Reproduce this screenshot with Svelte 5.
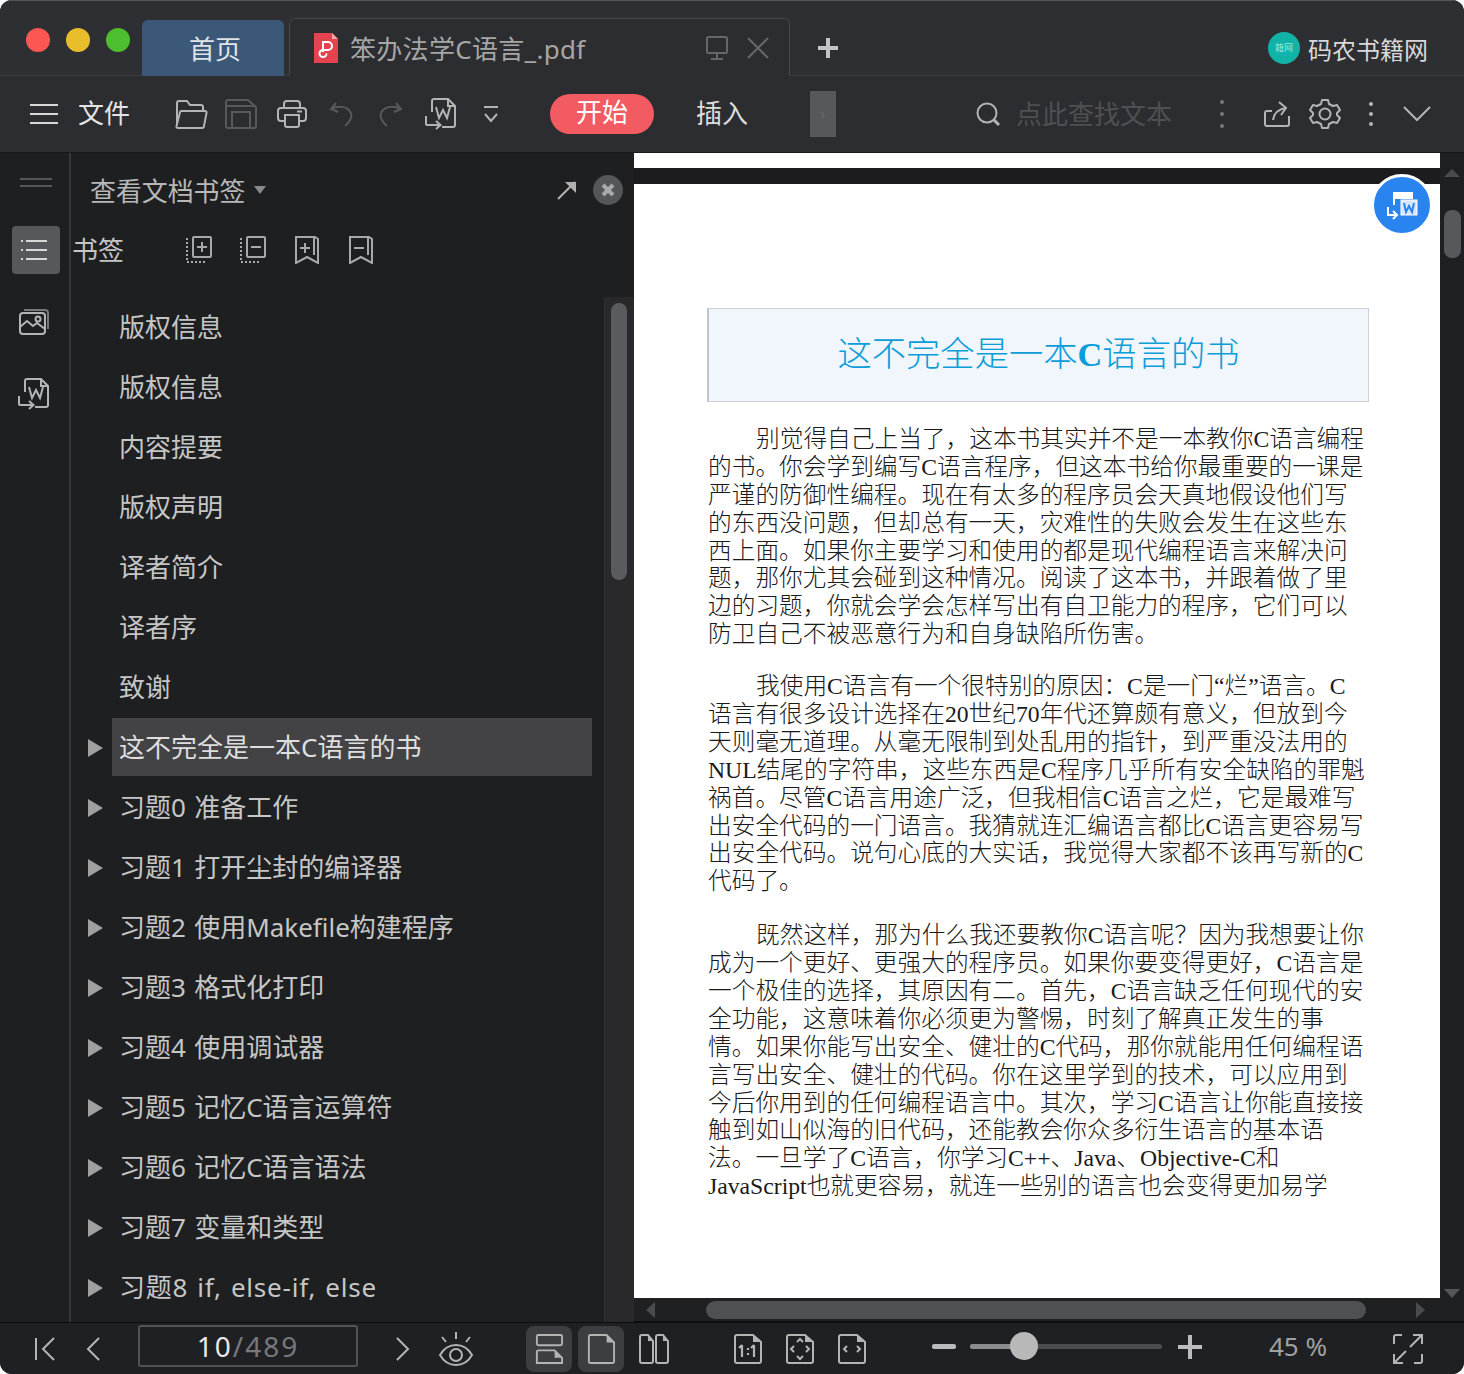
<script>
	const bookmarks = [
		{ label: '版权信息' },
		{ label: '版权信息' },
		{ label: '内容提要' },
		{ label: '版权声明' },
		{ label: '译者简介' },
		{ label: '译者序' },
		{ label: '致谢' },
		{ label: '这不完全是一本C语言的书', more: true, active: true },
		{ label: '习题0 准备工作', more: true },
		{ label: '习题1 打开尘封的编译器', more: true },
		{ label: '习题2 使用Makefile构建程序', more: true },
		{ label: '习题3 格式化打印', more: true },
		{ label: '习题4 使用调试器', more: true },
		{ label: '习题5 记忆C语言运算符', more: true },
		{ label: '习题6 记忆C语言语法', more: true },
		{ label: '习题7 变量和类型', more: true },
		{ label: '习题8 if, else-if, else', more: true, wide: true }
	];

	const paragraphs = [
		[
			'别觉得自己上当了，这本书其实并不是一本教你C语言编程',
			'的书。你会学到编写C语言程序，但这本书给你最重要的一课是',
			'严谨的防御性编程。现在有太多的程序员会天真地假设他们写',
			'的东西没问题，但却总有一天，灾难性的失败会发生在这些东',
			'西上面。如果你主要学习和使用的都是现代编程语言来解决问',
			'题，那你尤其会碰到这种情况。阅读了这本书，并跟着做了里',
			'边的习题，你就会学会怎样写出有自卫能力的程序，它们可以',
			'防卫自己不被恶意行为和自身缺陷所伤害。'
		],
		[
			'我使用C语言有一个很特别的原因：C是一门“烂”语言。C',
			'语言有很多设计选择在20世纪70年代还算颇有意义，但放到今',
			'天则毫无道理。从毫无限制到处乱用的指针，到严重没法用的',
			'NUL结尾的字符串，这些东西是C程序几乎所有安全缺陷的罪魁',
			'祸首。尽管C语言用途广泛，但我相信C语言之烂，它是最难写',
			'出安全代码的一门语言。我猜就连汇编语言都比C语言更容易写',
			'出安全代码。说句心底的大实话，我觉得大家都不该再写新的C',
			'代码了。'
		],
		[
			'既然这样，那为什么我还要教你C语言呢？因为我想要让你',
			'成为一个更好、更强大的程序员。如果你要变得更好，C语言是',
			'一个极佳的选择，其原因有二。首先，C语言缺乏任何现代的安',
			'全功能，这意味着你必须更为警惕，时刻了解真正发生的事',
			'情。如果你能写出安全、健壮的C代码，那你就能用任何编程语',
			'言写出安全、健壮的代码。你在这里学到的技术，可以应用到',
			'今后你用到的任何编程语言中。其次，学习C语言让你能直接接',
			'触到如山似海的旧代码，还能教会你众多衍生语言的基本语',
			'法。一旦学了C语言，你学习C++、Java、Objective-C和',
			'JavaScript也就更容易，就连一些别的语言也会变得更加易学'
		]
	];
</script>

{#snippet wordIcon()}
	<svg class="ic" width="32" height="32" viewBox="0 0 32 32">
		<path d="M7 14V3a2 2 0 0 1 2-2h14l7 7v19a2 2 0 0 1-2 2H17" />
		<path d="M23 1v7h7" />
		<path d="M11 9l3 11 4-8 4 8 3-11" />
		<path d="M1 18v8a1 1 0 0 0 1 1h13" />
		<path d="M11 23l4.500 4-4.500 4" />
	</svg>
{/snippet}

{#snippet pageShape()}
	<path d="M3 1h16l8 7v19a2 2 0 0 1-2 2H3a2 2 0 0 1-2-2V3a2 2 0 0 1 2-2z" />
	<path d="M19 1l8 7h-8z" fill="#b4b4b4" stroke="none" />
{/snippet}

<div class="window" lang="zh-CN">
	<header class="titlebar">
		<div class="lights">
			<span class="light red"></span>
			<span class="light yellow"></span>
			<span class="light green"></span>
		</div>
		<div class="tab home">首页</div>
		<div class="tab doc">
			<svg width="26" height="32" viewBox="0 0 26 32" class="pdf">
				<path d="M1 1h18l6 6v24H1z" fill="#e5444f" />
				<path d="M19 1l6 6h-6z" fill="#f4a3a8" />
				<path d="M10 20V10h5a4 4 0 0 1 0 8h-5a3.5 3.5 0 1 0 3.5 3.5" fill="none" stroke="#fff" stroke-width="2" />
			</svg>
			<span class="doc-name">笨办法学C语言_.pdf</span>
			<svg class="ic dim" width="24" height="26" viewBox="0 0 24 26">
				<rect x="2" y="2" width="20" height="16" rx="1.5" />
				<path d="M12 18v5M6 24h12" />
			</svg>
			<svg class="ic dim x" width="24" height="24" viewBox="0 0 24 24">
				<path d="M2 2l20 20M22 2L2 22" />
			</svg>
		</div>
		<svg class="plus" width="22" height="22" viewBox="0 0 22 22">
			<path d="M11 1v20M1 11h20" />
		</svg>
		<div class="account">
			<span class="avatar">籍网</span>
			<span>码农书籍网</span>
		</div>
	</header>

	<nav class="toolbar">
		<span class="slot ham">
			<svg class="ic bright" width="28" height="20" viewBox="0 0 28 20">
				<path d="M0 1h28M0 10h28M0 19h28" />
			</svg>
		</span>
		<span class="file">文件</span>
		<div class="tools">
			<span class="slot">
				<svg class="ic" width="33" height="29" viewBox="0 0 33 29">
					<path d="M2 25V3a2 2 0 0 1 2-2h8l3 4h11a2 2 0 0 1 2 2v3" />
					<path d="M7 11h23a1.5 1.5 0 0 1 1.5 2L29 26a2 2 0 0 1-2 2H3a1.5 1.5 0 0 1-1.5-2L5 12.5A1.5 1.5 0 0 1 7 11z" />
				</svg>
			</span>
			<span class="slot">
				<svg class="ic off" width="32" height="30" viewBox="0 0 32 30">
					<path d="M3 1h20l8 7v19a2 2 0 0 1-2 2H3a2 2 0 0 1-2-2V3a2 2 0 0 1 2-2z" />
					<path d="M2 7h28M7 29V13h18v16" />
				</svg>
			</span>
			<span class="slot print">
				<svg class="ic" width="30" height="28" viewBox="0 0 30 28">
					<path d="M7 8V4a3 3 0 0 1 3-3h10a3 3 0 0 1 3 3v4" />
					<path d="M7 21H4a3 3 0 0 1-3-3v-7a3 3 0 0 1 3-3h22a3 3 0 0 1 3 3v7a3 3 0 0 1-3 3h-3" />
					<path d="M8 15h14v10a2 2 0 0 1-2 2H10a2 2 0 0 1-2-2z" />
					<path d="M20 11.500h5" />
				</svg>
			</span>
			<span class="slot">
				<svg class="ic off" width="24" height="26" viewBox="0 0 24 26">
					<path d="M7 2L2 8l7 3" />
					<path d="M2 8c6-3 14-3 18 1s3 10-4 16" />
				</svg>
			</span>
			<span class="slot">
				<svg class="ic off" width="24" height="26" viewBox="0 0 24 26">
					<path d="M17 2l5 6-7 3" />
					<path d="M22 8C16 5 8 5 4 9s-3 10 4 16" />
				</svg>
			</span>
			<span class="slot">{@render wordIcon()}</span>
			<span class="slot">
				<svg class="ic" width="16" height="18" viewBox="0 0 16 18">
					<path d="M1 2h14M2 9l6 7 6-7" />
				</svg>
			</span>
		</div>
		<button class="pill">开始</button>
		<span class="insert">插入</span>
		<span class="more-tabs">›</span>
		<span class="slot search-ic">
			<svg class="ic" width="26" height="26" viewBox="0 0 26 26">
				<circle cx="12" cy="12" r="9.500" />
				<path d="M19 19l5 5" stroke-width="3" />
			</svg>
		</span>
		<span class="search-text">点此查找文本</span>
		<span class="slot dots-a"><span class="dots dark"></span></span>
		<span class="slot share">
			<svg class="ic" width="26" height="28" viewBox="0 0 26 28">
				<path d="M8 11H3a2 2 0 0 0-2 2v11a2 2 0 0 0 2 2h20a2 2 0 0 0 2-2v-8" />
				<path d="M9 20c1-7 6-11 13-12" />
				<path d="M15 2l7 6-5 7" />
			</svg>
		</span>
		<span class="slot">
			<svg class="ic" width="32" height="32" viewBox="0 0 32 32">
				<circle cx="16" cy="16" r="5.500" />
				<path d="M13 2h6l1 4 4 2 4-1 3 5-3 3v2l3 3-3 5-4-1-4 2-1 4h-6l-1-4-4-2-4 1-3-5 3-3v-2L1 12l3-5 4 1 4-2z" stroke-linejoin="round" />
			</svg>
		</span>
		<span class="slot dots-b"><span class="dots"></span></span>
		<span class="slot">
			<svg class="ic" width="28" height="16" viewBox="0 0 28 16">
				<path d="M1 1l13 13L27 1" />
			</svg>
		</span>
	</nav>

	<main class="main">
		<aside class="rail">
			<div class="grip"></div>
			<div class="rail-btn active">
				<svg class="ic bright" width="26" height="22" viewBox="0 0 26 22">
					<path d="M0 2h2M5 2h21M0 11h2M5 11h21M0 20h2M5 20h21" />
				</svg>
			</div>
			<div class="rail-btn">
				<svg class="ic" width="30" height="26" viewBox="0 0 30 26">
					<path d="M5 1h21a3 3 0 0 1 3 3v16" opacity=".6" />
					<rect x="1" y="4" width="25" height="21" rx="3" />
					<path d="M1 18l7-6 6 5 4-3 8 6" />
					<circle cx="19" cy="10" r="2.500" />
				</svg>
			</div>
			<div class="rail-btn">{@render wordIcon()}</div>
		</aside>

		<section class="panel">
			<div class="panel-head">
				<span class="panel-title">查看文档书签</span>
				<span class="caret"></span>
				<svg class="ic pin" width="20" height="20" viewBox="0 0 20 20">
					<path d="M1 19L18 2" />
					<path d="M8 2h11v11z" fill="#b0b0b0" stroke="none" />
				</svg>
				<span class="close">
					<svg width="14" height="14" viewBox="0 0 14 14"><path d="M2 2l10 10M12 2L2 12" /></svg>
				</span>
			</div>
			<div class="panel-tools">
				<span class="panel-label">书签</span>
				<span class="slot-sm first">
					<svg class="ic thin" width="28" height="28" viewBox="0 0 28 28">
						<path d="M2 2v24M2 26h20" stroke-dasharray="2 2" />
						<rect x="8" y="1" width="18" height="20" rx="1" />
						<path d="M17 6v10M12 11h10" />
					</svg>
				</span>
				<span class="slot-sm">
					<svg class="ic thin" width="28" height="28" viewBox="0 0 28 28">
						<path d="M2 2v24M2 26h20" stroke-dasharray="2 2" />
						<rect x="8" y="1" width="18" height="20" rx="1" />
						<path d="M12 11h10" />
					</svg>
				</span>
				<span class="slot-sm">
					<svg class="ic thin" width="26" height="28" viewBox="0 0 26 28">
						<path d="M2 1h19l3 2v24l-11-6-11 6z" />
						<path d="M20 1v18M11 7v10M6 12h10" />
					</svg>
				</span>
				<span class="slot-sm">
					<svg class="ic thin" width="26" height="28" viewBox="0 0 26 28">
						<path d="M2 1h19l3 2v24l-11-6-11 6z" />
						<path d="M20 1v18M6 12h10" />
					</svg>
				</span>
			</div>
			<div class="panel-body">
				<ul class="list">
					{#each bookmarks as item}
						<li class="row">
							<span class="arrow-slot">
								{#if item.more}<span class="arrow"></span>{/if}
							</span>
							<span class="label" class:active={item.active} class:wide={item.wide}>{item.label}</span>
						</li>
					{/each}
				</ul>
				<div class="list-scroll"><span class="list-thumb"></span></div>
			</div>
		</section>

		<section class="viewer">
			<div class="viewer-top">
				<div class="pages">
					<div class="page-tail"></div>
					<div class="page-gap"></div>
					<article class="page">
						<h1 class="heading">这不完全是一本<b>C</b>语言的书</h1>
						{#each paragraphs as lines}
							<div class="para">
								{#each lines as line}
									<div class="line">{line}</div>
								{/each}
							</div>
						{/each}
					</article>
				</div>
				<div class="vscroll">
					<span class="tri up"></span>
					<span class="vthumb"></span>
					<span class="tri down"></span>
				</div>
			</div>
			<div class="hscroll">
				<span class="tri left"></span>
				<span class="hthumb"></span>
				<span class="tri right"></span>
			</div>
			<div class="fab">
				<svg width="32" height="30" viewBox="0 0 32 30">
					<path d="M7 2h20v7H7zM7 9h2v6H7z" fill="#fff" />
					<rect x="15" y="10" width="16" height="15" fill="#d6e7fd" stroke="#fff" />
					<path d="M18 13l2 9 3-6 3 6 2-9" fill="none" stroke="#2a84f0" stroke-width="2" />
					<path d="M2 17v8h8M7 21l4 4-4 4" fill="none" stroke="#fff" stroke-width="2" />
				</svg>
			</div>
		</section>
	</main>

	<footer class="statusbar">
		<span class="slot first-page">
			<svg class="ic" width="22" height="24" viewBox="0 0 22 24"><path d="M2 1v22M20 1L9 12l11 11" /></svg>
		</span>
		<span class="slot">
			<svg class="ic" width="14" height="24" viewBox="0 0 14 24"><path d="M13 1L2 12l11 11" /></svg>
		</span>
		<div class="pager"><b>10</b><span>/489</span></div>
		<span class="slot next-page">
			<svg class="ic" width="14" height="24" viewBox="0 0 14 24"><path d="M1 1l11 11L1 23" /></svg>
		</span>
		<span class="slot eye">
			<svg class="ic" width="34" height="36" viewBox="0 0 34 36">
				<path d="M17 1v7M3 6l4 5M31 6l-4 5" />
				<path d="M1 24c4-7 10-10 16-10s12 3 16 10c-4 7-10 10-16 10S5 31 1 24z" />
				<circle cx="17" cy="24" r="6" />
			</svg>
		</span>
		<span class="mode first-mode">
			<svg class="ic" width="28" height="30" viewBox="0 0 30 32">
				<rect x="2" y="1" width="27" height="11" rx="1.500" />
				<path d="M2 31V19a1.500 1.500 0 0 1 1.500-1.500H21l8 8V31z" />
				<path d="M21 17.500l8 8h-8z" fill="#b4b4b4" stroke="none" />
			</svg>
		</span>
		<span class="mode">
			<svg class="ic" width="28" height="30" viewBox="0 0 30 32">
				<path d="M4 1h17l8 8v20a2 2 0 0 1-2 2H4a2 2 0 0 1-2-2V3a2 2 0 0 1 2-2z" />
				<path d="M21 1l8 8h-8z" fill="#b4b4b4" stroke="none" />
			</svg>
		</span>
		<span class="slot">
			<svg class="ic" width="30" height="30" viewBox="0 0 30 30">
				<path d="M3 1h6l5 6v20a2 2 0 0 1-2 2H3a2 2 0 0 1-2-2V3a2 2 0 0 1 2-2z" />
				<path d="M19 1h5l5 6v20a2 2 0 0 1-2 2h-8a2 2 0 0 1-2-2V3a2 2 0 0 1 2-2z" />
				<path d="M9 1l5 6H9zM24 1l5 6h-5z" fill="#b4b4b4" stroke="none" />
			</svg>
		</span>
		<span class="slot one-one">
			<svg class="ic" width="28" height="30" viewBox="0 0 28 30">
				{@render pageShape()}
				<path d="M8 11v12M8 11l-3 3M20 11v12M20 11l-3 3M14 14v2M14 19v2" stroke-width="2.200" />
			</svg>
		</span>
		<span class="slot fit">
			<svg class="ic" width="28" height="30" viewBox="0 0 28 30">
				{@render pageShape()}
				<path d="M11 8l3-3 3 3M11 22l3 3 3-3M8 12l-3 3 3 3M20 12l3 3-3 3" />
			</svg>
		</span>
		<span class="slot fit">
			<svg class="ic" width="28" height="30" viewBox="0 0 28 30">
				{@render pageShape()}
				<path d="M9 12l-3 3 3 3M19 12l3 3-3 3" />
			</svg>
		</span>
		<span class="slot zoom-out"><span class="minus"></span></span>
		<div class="slider">
			<span class="fill"></span>
			<span class="knob"></span>
		</div>
		<span class="slot zoom-in">
			<svg class="zoom-plus" width="24" height="24" viewBox="0 0 24 24"><path d="M12 0v24M0 12h24" /></svg>
		</span>
		<span class="percent">45 %</span>
		<span class="slot expand">
			<svg class="ic" width="30" height="30" viewBox="0 0 30 30">
				<path d="M1 10V3a2 2 0 0 1 2-2h6M20 1h9v9M29 1L17 13M29 20v7a2 2 0 0 1-2 2h-6M10 29H1v-9M1 29l12-12" />
			</svg>
		</span>
	</footer>
</div>

<style>
	:global(body) {
		margin: 0;
		background: #fff;
	}

	.window {
		width: 1464px;
		height: 1374px;
		display: flex;
		flex-direction: column;
		overflow: hidden;
		border-radius: 12px;
		background: #1f2023;
		font-family: 'Noto Sans', 'Noto Sans CJK SC', sans-serif;
		color: #c8c8c8;
	}

	.ic {
		fill: none;
		stroke: #b4b4b4;
		stroke-width: 2;
		display: block;
	}
	.ic.bright {
		stroke: #d8d8d8;
	}
	.ic.off {
		stroke: #58595c;
	}
	.ic.dim {
		stroke: #66676a;
	}
	.ic.thin {
		stroke: #a8a8a8;
	}

	.slot {
		width: 48px;
		height: 48px;
		flex: none;
		display: flex;
		align-items: center;
		justify-content: center;
	}

	/* title bar */
	.titlebar {
		height: 76px;
		flex: none;
		display: flex;
		align-items: flex-end;
		padding-left: 26px;
		box-sizing: border-box;
		background: #2e2f32;
		border-top: 1px solid #55565a;
		border-bottom: 1px solid #3a3b3f;
	}
	.lights {
		display: flex;
		gap: 16px;
		align-self: flex-start;
		margin-top: 27px;
	}
	.light {
		width: 24px;
		height: 24px;
		border-radius: 50%;
	}
	.red {
		background: #fc5753;
	}
	.yellow {
		background: #e8bd2c;
	}
	.green {
		background: #4dbe2e;
	}
	.tab {
		height: 56px;
		box-sizing: border-box;
		font-size: 26px;
		border-radius: 6px 6px 0 0;
		margin-bottom: -1px;
	}
	.home {
		width: 142px;
		margin-left: 12px;
		padding-left: 4px;
		display: flex;
		align-items: center;
		justify-content: center;
		background: #3b5878;
		color: #e0e4e8;
	}
	.doc {
		width: 501px;
		height: 58px;
		margin-left: 5px;
		display: flex;
		align-items: center;
		padding-left: 23px;
		border: 1px solid #47484c;
		border-bottom: none;
		background: #2c2d30;
		color: #a6a6a6;
	}
	.doc-name {
		margin-left: 11px;
		width: 355px;
		letter-spacing: 0.3px;
		white-space: nowrap;
	}
	.x {
		margin-left: 17px;
	}
	.plus {
		fill: none;
		stroke: #c4c4c4;
		stroke-width: 4;
		margin: 0 0 16px 27px;
	}
	.account {
		margin-left: auto;
		align-self: center;
		margin-top: 20px;
		padding-right: 36px;
		display: flex;
		align-items: center;
		gap: 8px;
		font-size: 24px;
		color: #d8d8d8;
	}
	.avatar {
		width: 32px;
		height: 32px;
		border-radius: 50%;
		background: #10b3a5;
		color: #8fe3da;
		font-size: 9px;
		line-height: 32px;
		text-align: center;
		white-space: nowrap;
	}

	/* tool bar */
	.toolbar {
		height: 77px;
		flex: none;
		display: flex;
		align-items: center;
		padding-left: 20px;
		box-sizing: border-box;
		background: #2c2d30;
		border-bottom: 1px solid #17181a;
		font-size: 26px;
	}
	.file {
		margin-left: 10px;
		width: 53px;
		padding-bottom: 4px;
		color: #e4e4e4;
	}
	.tools {
		display: flex;
		margin-left: 35px;
	}
	.tools .slot {
		width: 50px;
	}
	.tools .print {
		padding-left: 2px;
		box-sizing: border-box;
	}
	.pill {
		margin-left: 34px;
		width: 104px;
		height: 40px;
		padding: 0 0 4px;
		border: none;
		border-radius: 20px;
		background: #f25b62;
		color: #fff;
		font: inherit;
		line-height: 1;
	}
	.insert {
		margin-left: 42px;
		width: 53px;
		padding-bottom: 4px;
		color: #dcdcdc;
	}
	.more-tabs {
		margin-left: 61px;
		width: 26px;
		height: 46px;
		background: #57585b;
		color: #6a6b6e;
		font-size: 16px;
		line-height: 46px;
		text-align: center;
	}
	.search-ic {
		margin-left: 128px;
	}
	.search-text {
		margin-left: 4px;
		width: 157px;
		padding-bottom: 2px;
		color: #4f5053;
		white-space: nowrap;
	}
	.dots-a {
		margin-left: 25px;
	}
	.share {
		margin-left: 7px;
	}
	.dots-b {
		width: 44px;
	}
	.dots {
		width: 4px;
		height: 4px;
		border-radius: 50%;
		background: #b4b4b4;
		box-shadow:
			0 -10px 0 #b4b4b4,
			0 10px 0 #b4b4b4;
	}
	.dots.dark {
		background: #77787b;
		box-shadow:
			0 -12px 0 #77787b,
			0 12px 0 #77787b;
	}

	/* main area */
	.main {
		flex: 1;
		min-height: 0;
		display: flex;
		position: relative;
	}
	.rail {
		width: 71px;
		flex: none;
		box-sizing: border-box;
		padding-left: 12px;
		display: flex;
		flex-direction: column;
		background: #1e1f21;
		border-right: 2px solid #36373a;
	}
	.grip {
		width: 32px;
		height: 9px;
		margin: 25px 0 39px 8px;
		box-sizing: border-box;
		border-top: 2px solid #55565a;
		border-bottom: 2px solid #55565a;
	}
	.rail-btn {
		width: 48px;
		height: 48px;
		margin-bottom: 24px;
		padding-right: 5px;
		box-sizing: border-box;
		display: flex;
		align-items: center;
		justify-content: center;
		border-radius: 4px;
	}
	.rail-btn.active {
		padding-right: 4px;
		background: #57585b;
	}

	.panel {
		width: 563px;
		flex: none;
		display: flex;
		flex-direction: column;
		background: #1e1f21;
	}
	.panel-head {
		height: 74px;
		flex: none;
		display: flex;
		align-items: center;
		padding-left: 19px;
	}
	.panel-title {
		font-size: 25.900px;
		color: #b8b8b8;
		width: 164px;
		white-space: nowrap;
	}
	.caret {
		width: 0;
		height: 0;
		border: 6px solid transparent;
		border-top: 8px solid #8a8a8a;
		border-bottom: none;
	}
	.pin {
		margin-left: 291px;
	}
	.close {
		margin-left: 16px;
		width: 30px;
		height: 30px;
		border-radius: 50%;
		background: #55565a;
		display: flex;
		align-items: center;
		justify-content: center;
	}
	.close path {
		fill: none;
		stroke: #a9a9a9;
		stroke-width: 4;
	}
	.panel-tools {
		height: 46px;
		flex: none;
		display: flex;
		align-items: center;
		padding-left: 1px;
	}
	.panel-label {
		width: 52px;
		padding-bottom: 2px;
		font-size: 26px;
		color: #c4c4c4;
	}
	.slot-sm {
		width: 54px;
		display: flex;
		justify-content: center;
		flex: none;
	}
	.slot-sm.first {
		margin-left: 48px;
	}
	.panel-body {
		flex: 1;
		min-height: 0;
		margin-top: 24px;
		display: flex;
	}
	.list {
		flex: 1;
		min-width: 0;
		margin: 0;
		padding: 0;
		list-style: none;
	}
	.row {
		height: 60px;
		display: flex;
		align-items: center;
		font-size: 26px;
	}
	.arrow-slot {
		width: 41px;
		flex: none;
		display: flex;
		justify-content: flex-end;
		padding: 2px 9px 0 0;
		box-sizing: border-box;
	}
	.arrow {
		width: 0;
		height: 0;
		border: 9px solid transparent;
		border-left: 15px solid #a0a0a0;
		border-right: none;
	}
	.label {
		width: 480px;
		height: 58px;
		line-height: 59px;
		padding-left: 7px;
		box-sizing: border-box;
		white-space: nowrap;
		word-spacing: 1.500px;
		color: #c6c6c6;
	}
	.label.active {
		background: #434346;
		color: #dedede;
	}
	.label.wide {
		letter-spacing: 0.800px;
	}
	.list-scroll {
		width: 30px;
		flex: none;
		background: #29292c;
		border-left: 1px solid #303134;
		box-sizing: border-box;
		padding: 6px 0 0 6px;
	}
	.list-thumb {
		display: block;
		width: 16px;
		height: 277px;
		border-radius: 8px;
		background: #5a5b5e;
	}

	/* page viewer */
	.viewer {
		flex: 1;
		min-width: 0;
		display: flex;
		flex-direction: column;
		position: relative;
		background: #1c1c1e;
	}
	.viewer-top {
		flex: 1;
		min-height: 0;
		display: flex;
	}
	.pages {
		flex: 1;
		min-width: 0;
		display: flex;
		flex-direction: column;
	}
	.page-tail {
		height: 15px;
		background: #fff;
	}
	.page-gap {
		height: 16px;
		background: #1c1c1e;
	}
	.page {
		flex: 1;
		min-height: 0;
		background: #fff;
		padding: 124px 0 0 74px;
		box-sizing: border-box;
		color: #1a1a1a;
		font-family: 'Liberation Serif', 'Noto Sans CJK SC', serif;
		font-size: 23.700px;
		font-weight: 300;
		line-height: 27.900px;
	}
	.heading {
		width: 662px;
		height: 94px;
		margin: 0 0 24px -1px;
		box-sizing: border-box;
		border: 1px solid #cdd0d3;
		border-left: 2px solid #c2c4c6;
		background: #f0f6fc;
		color: #0c9cd8;
		font-size: 34.300px;
		font-weight: 300;
		line-height: 90px;
		text-align: center;
		white-space: nowrap;
	}
	.heading b {
		font-weight: 700;
	}
	.para {
		margin-bottom: 24px;
	}
	.para:nth-of-type(2) {
		margin-bottom: 26px;
	}
	.line {
		height: 27.900px;
		white-space: nowrap;
	}
	.line:first-child {
		text-indent: 48px;
	}
	.vscroll {
		width: 24px;
		flex: none;
		display: flex;
		flex-direction: column;
		align-items: center;
		background: #1f2022;
	}
	.vthumb {
		width: 17px;
		height: 48px;
		margin-top: 33px;
		border-radius: 8px;
		background: #57585b;
	}
	.tri {
		width: 0;
		height: 0;
		flex: none;
		border: 8px solid transparent;
	}
	.up {
		margin-top: 16px;
		border-bottom: 8px solid #4a4b4e;
		border-top: none;
	}
	.down {
		margin-top: auto;
		border-top: 9px solid #55565a;
		border-bottom: none;
	}
	.hscroll {
		height: 24px;
		flex: none;
		display: flex;
		align-items: center;
		background: #1f2022;
		border-bottom: 1px solid #0f0f10;
		box-sizing: border-box;
	}
	.left {
		margin-left: 12px;
		border-right: 9px solid #4a4b4e;
		border-left: none;
	}
	.hthumb {
		width: 660px;
		height: 18px;
		margin-left: 51px;
		border-radius: 9px;
		background: #4f5053;
	}
	.right {
		margin-left: 50px;
		border-left: 9px solid #4a4b4e;
		border-right: none;
	}
	.fab {
		position: absolute;
		left: 737px;
		top: 21px;
		width: 62px;
		height: 62px;
		box-sizing: border-box;
		border: 3px solid #fff;
		border-radius: 50%;
		background: #2a84f0;
		display: flex;
		align-items: center;
		justify-content: center;
	}

	/* status bar */
	.statusbar {
		height: 52px;
		flex: none;
		display: flex;
		align-items: center;
		padding-left: 21px;
		box-sizing: border-box;
		background: #1f2023;
		border-top: 1px solid #0d0d0e;
	}
	.pager {
		margin: 0 0 5px 21px;
		width: 220px;
		height: 42px;
		box-sizing: border-box;
		border: 2px solid #515255;
		border-radius: 3px;
		text-align: center;
		font-size: 28px;
		line-height: 38px;
		letter-spacing: 2px;
		color: #77787b;
	}
	.pager b {
		font-weight: 400;
		color: #e8e8e8;
	}
	.next-page {
		margin-left: 21px;
	}
	.eye {
		margin-left: 5px;
	}
	.mode {
		width: 46px;
		height: 46px;
		flex: none;
		display: flex;
		align-items: center;
		justify-content: center;
		margin-left: 6px;
		border-radius: 8px;
		background: #3d3e42;
	}
	.first-mode {
		margin-left: 46px;
	}
	.mode + .slot {
		margin-left: 6px;
	}
	.one-one {
		margin-left: 46px;
	}
	.fit {
		margin-left: 4px;
	}
	.zoom-out {
		margin: 0 0 4px 44px;
	}
	.minus {
		width: 24px;
		height: 5px;
		border-radius: 2px;
		background: #bcbcbc;
	}
	.slider {
		width: 192px;
		height: 5px;
		flex: none;
		margin: 0 0 4px 2px;
		position: relative;
		border-radius: 3px;
		background: #4c4d50;
	}
	.fill {
		display: block;
		width: 54px;
		height: 100%;
		border-radius: 3px;
		background: #8c8d90;
	}
	.knob {
		position: absolute;
		left: 40px;
		top: -12px;
		width: 28px;
		height: 28px;
		border-radius: 50%;
		background: #b8b8b8;
	}
	.zoom-in {
		margin: 0 0 4px 4px;
	}
	.zoom-plus {
		fill: none;
		stroke: #bcbcbc;
		stroke-width: 4;
	}
	.percent {
		margin: 0 0 6px 55px;
		width: 60px;
		font-size: 26px;
		color: #a0a0a0;
		white-space: nowrap;
	}
	.expand {
		margin-left: 55px;
	}
</style>
